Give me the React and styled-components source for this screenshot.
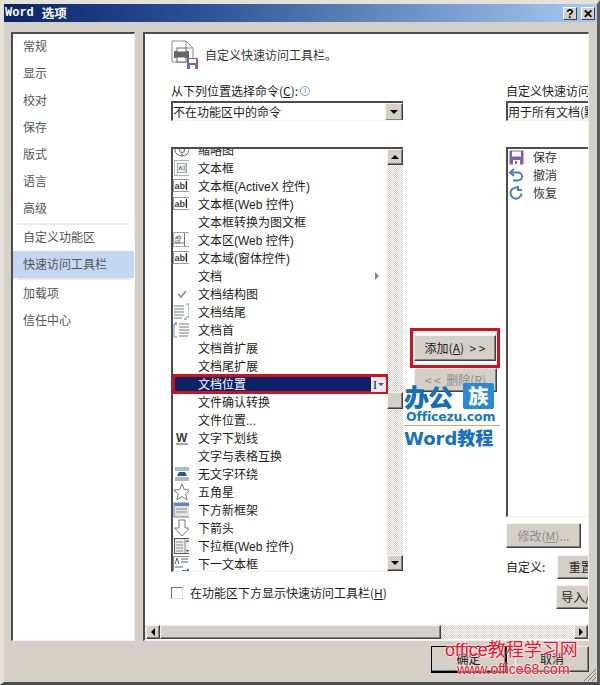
import React from 'react';
import styled, { createGlobalStyle } from 'styled-components';

const Global = createGlobalStyle`
  html, body { margin: 0; padding: 0; background: #d4d0c8; }
  * { box-sizing: border-box; }
`;
const FONT = `"Liberation Sans", "Noto Sans CJK SC", sans-serif`;
const CJK = `"Noto Sans CJK SC", "Liberation Sans", sans-serif`;
const DITHER = `repeating-conic-gradient(#d4d0c8 0 25%, #fff 0 50%) 0 0 / 2px 2px`;

const Window = styled.div`
  position: relative; width: 600px; height: 685px; display: flex; flex-direction: column;
  background: #d4d0c8; overflow: hidden; font: 12px/14px ${FONT}; color: #1c1c1c;
  border-style: solid; border-width: 4px 3px 3px 4px;
  border-color: #e4e1db #5c5c5c #4c4c4c #e4e1db;
`;
const TitleBar = styled.div`
  height: 18px; flex: none; display: flex; align-items: center; padding: 0 2px 0 1px;
  background: linear-gradient(90deg, #0a246a 0%, #2f5597 35%, #a6caf0 100%); color: #fff;
`;
const TitleWord = styled.span`font: bold 12px/16px "Liberation Mono", monospace; margin-right: 8px;`;
const TitleCjk = styled.span`font: bold 12.5px/16px ${CJK}; flex: 1;`;
const CaptionButton = styled.div`
  width: 14px; height: 13px; margin-left: ${p => p.$gap}px; background: #d4d0c8; color: #000;
  font: bold 12px/12px "Liberation Sans", sans-serif; text-align: center;
  border: 1px solid; border-color: #fff #404040 #404040 #fff;
`;
const Body = styled.div`
  flex: none; display: flex; gap: 8px; padding: 10px 6px 0 7px; height: 620px;
`;
const Inset = styled.div`
  border-style: solid; border-width: 2px 1px 1px 2px;
  border-color: #4c4c4c #f2f2f2 #f2f2f2 #4c4c4c; background: #fff;
`;
const Sidebar = styled(Inset)`
  width: 124px; height: 609px; color: #555; flex: none;
`;
const NavItem = styled.div`
  height: 27px; display: flex; align-items: center; padding: ${p => p.$pad || '0 0 2px 10px'}; font-family: ${CJK};
  background: ${p => p.$active ? '#c5d6f2' : 'transparent'};
`;
const NavRule = styled.div`height: 2px; margin: 0 4px -1px; background: #e9e9e9;`;
const MainPanel = styled(Inset)`
  width: 446px; height: 609px; display: flex; flex-direction: column; overflow: hidden; flex: none;
`;
const Scroll = styled.div`flex: 1; min-height: 0; padding: 5px 0 0 26px; overflow: hidden;`;
const Header = styled.div`display: flex; align-items: center; gap: 6px; height: 32px; font-family: ${CJK}; color: #333;`;
const Columns = styled.div`display: flex; margin-top: 12px; width: 600px;`;
const Col = styled.div`display: flex; flex-direction: column; flex: none; width: ${p => p.$w}px;`;
const Label = styled.div`height: 14px; padding-top: 2px; margin-bottom: 4px; font-family: ${CJK}; display: flex; align-items: center; white-space: nowrap;`;
const U = styled.u`text-underline-offset: 1px;`;
const Info = styled.span`
  display: inline-block; width: 10px; height: 10px; margin-left: 2px; border: 1px solid #7aa0d0; border-radius: 50%;
  color: #4a7ab8; font: 8px/8px "Liberation Sans", sans-serif; text-align: center;
`;
const Select = styled(Inset)`
  height: 20px; display: flex; align-items: center; padding-left: 0; font-family: ${CJK}; overflow: hidden; white-space: nowrap;
  justify-content: space-between; border-right-width: 0;
`;
const Raised = styled.div`
  background: #d4d0c8; border: 1px solid; border-color: #f4f2ee #404040 #404040 #f4f2ee;
  box-shadow: inset -1px -1px 0 #808080;
`;
const ArrowBtn = styled(Raised)`
  width: 18px; height: 18px; flex: none; display: flex; align-items: center; justify-content: center; position: relative;
`;
const Tri = styled.i`
  width: 0; height: 0; border-style: solid; display: block;
  ${p => p.$dir === 'up' && `border-width: 0 4px 4px; border-color: transparent transparent #000;`}
  ${p => p.$dir === 'down' && `border-width: 4px 4px 0; border-color: #000 transparent transparent;`}
  ${p => p.$dir === 'left' && `border-width: 4px 4px 4px 0; border-color: transparent #000 transparent transparent;`}
  ${p => p.$dir === 'right' && `border-width: 4px 0 4px 4px; border-color: transparent transparent transparent #000;`}
  ${p => p.$dir === 'sub' && `border-width: 4px 0 4px 4px; border-color: transparent transparent transparent #888;`}
`;
const ListBox = styled(Inset)`
  margin-top: 26px; height: ${p => p.$h}px; display: flex; overflow-x: visible; overflow-y: clip; border-right-width: 0;
`;
const ListInner = styled.div`flex: 1; min-width: 0; overflow-x: visible; overflow-y: clip; position: relative; z-index: 1;`;
const ListShift = styled.div`margin-top: -8px; padding-bottom: 4px;`;
const Row = styled.div`
  height: 18px; display: flex; align-items: center; position: relative; white-space: nowrap; font-family: ${FONT};
  padding: 2px 0 0 25px; color: #1c1c1c;
  ${p => p.$selected && `
    background: #0a246a; color: #fff; outline: 3px solid #d4101c; outline-offset: -2px; z-index: 1;
  `}
`;
const RowIcon = styled.span`position: absolute; left: 0; top: 0; width: 16px; height: 18px; display: flex; align-items: center; justify-content: center;`;
const RowEnd = styled.span`position: absolute; right: 8px; top: 5px;`;
const SelBox = styled.span`
  position: absolute; right: 1px; top: 2px; width: 15px; height: 15px; background: #e7e9f4; color: #222;
  display: flex; align-items: center; justify-content: center; gap: 1px; font: 12px/14px "Liberation Serif", serif;
`;
const MiniTri = styled.i`width: 0; height: 0; border-style: solid; border-width: 3px 3px 0; border-color: #555 transparent transparent; display: block;`;
const VScroll = styled.div`
  width: 16px; flex: none; display: flex; flex-direction: column; background: ${DITHER};
`;
const VBtn = styled(Raised)`height: 16px; flex: none; display: flex; align-items: center; justify-content: center;`;
const VTrack = styled.div`flex: 1; padding-top: 227px;`;
const VThumb = styled(Raised)`height: 17px;`;
const CheckRow = styled.div`display: flex; align-items: center; gap: 7px; margin-top: 14px; height: 14px; font-family: ${CJK}; white-space: nowrap;`;
const Check = styled.span`
  width: 12px; height: 12px; display: block; background: #fff; border: 1px solid; border-color: #707070 #e0e0e0 #e0e0e0 #707070;
`;
const MidCol = styled(Col)`padding: 252px 0 0 11px; gap: 7px;`;
const Btn = styled(Raised)`
  position: relative; display: flex; align-items: center; justify-content: center; font-family: ${CJK};
  width: ${p => p.$w}px; height: ${p => p.$h}px; flex: none; white-space: pre;
  color: ${p => p.$off ? '#8f8d88' : '#1c1c1c'};
`;
const RedBox = styled.span`
  position: absolute; left: -5px; right: -5px; top: -8px; bottom: -8px; border: 3px solid #d4101c; pointer-events: none;
`;
const CustomRow = styled.div`display: flex; align-items: center; gap: 12px; margin-top: 7px; white-space: nowrap; font-family: ${CJK};`;
const ModWrap = styled.div`margin-top: 6px;`;
const ImportWrap = styled.div`margin: 6px 0 0 50px;`;
const PlainRow = styled.div`
  height: 18px; display: flex; align-items: center; position: relative; padding-left: 25px; font-family: ${CJK}; color: #333;
`;
const PlainList = styled.div`margin-top: -1px;`;
const HScroll = styled.div`height: 14px; flex: none; display: flex; margin-bottom: 1px; background: ${DITHER}; padding: 0 0 0 1px;`;
const HBtn = styled(Raised)`width: 14px; flex: none; display: flex; align-items: center; justify-content: center;`;
const HThumb = styled(Raised)`width: 281px; flex: none;`;
const HGap = styled.div`flex: 1;`;
const Footer = styled.div`flex: 1; display: flex; justify-content: flex-end; gap: 8px; padding: 4px 8px 0 0;`;
const OkBtn = styled(Btn)`border-color: #000; border-width: 1px 2px 2px 1px;`;
const Grip = styled.svg`position: absolute; right: 0; bottom: 0;`;
const Mark = styled.div`position: absolute; left: 400px; top: 378px; width: 96px; color: #1870c0; font-family: ${FONT}; z-index: 2;`;
const MarkTop = styled.div`display: flex; align-items: center; height: 28px;`;
const MarkBig = styled.span`font: 900 25px/28px ${CJK}; letter-spacing: -1px; width: 59px; color: #1470b8;`;
const MarkBox = styled.span`
  width: 31px; height: 26px; background: #2a8ad4; color: #fff; font: 900 20px/26px ${CJK}; text-align: center; border-radius: 2px;
`;
const MarkUrl = styled.div`font: bold 12.5px/13px "DejaVu Sans", sans-serif; background: #fff; color: #1a78c2; letter-spacing: -0.2px; padding-left: 2px; height: 16px; border-bottom: 1px solid #e8a060;`;
const MarkWord = styled.div`font: 900 18px/26px "DejaVu Sans", ${CJK}; background: #fff; white-space: nowrap; height: 26px;`;
const Stamp = styled.div`
  position: absolute; left: ${p => p.$left}px; color: #f0102a; white-space: nowrap; text-shadow: 0 0 2px #fff, 0 0 2px #fff;
  top: ${p => p.$top}px; font: ${p => p.$size}px/${p => p.$lh}px ${FONT};
`;
const StampCjk = styled.span`font-family: ${CJK};`;

const stroke = { fill: 'none', stroke: '#666', strokeWidth: 1 };
const Icon = ({ k }) => {
  switch (k) {
    case 'smart': return <svg width="18" height="18"><ellipse cx="9" cy="9" rx="7" ry="6" {...stroke} /><circle cx="9" cy="9" r="2.5" {...stroke} /><path d="M3 6l4 2M15 6l-4 2M9 12v3" {...stroke} /></svg>;
    case 'frame': return <svg width="18" height="18"><rect x="1.5" y="1.5" width="15" height="15" fill="none" stroke="#666" strokeDasharray="1 1" /><rect x="4.5" y="4.5" width="9" height="9" fill="#eef" stroke="#9aa" /><path d="M6 11l1.5-4 1.5 4M10.5 7h2M10.5 9h2M10.5 11h2" stroke="#567" fill="none" /></svg>;
    case 'abl': return <svg width="18" height="16"><rect x="0.5" y="1.5" width="16" height="12" fill="#fff" stroke="#9a9a9a" /><text x="1.5" y="11" fontFamily="Liberation Sans, sans-serif" fontSize="9" fill="#444" fontWeight="bold">abl</text><path d="M13.5 3v9" stroke="#222" /></svg>;
    case 'area': return <svg width="18" height="18"><rect x="0.5" y="1.5" width="16" height="14" fill="none" stroke="#777" strokeDasharray="2 1" /><path d="M11.5 2v13M1 12h10" stroke="#777" /><text x="2" y="8" fontFamily="Liberation Sans, sans-serif" fontSize="6" fill="#444">ab</text><text x="2" y="12" fontFamily="Liberation Sans, sans-serif" fontSize="5" fill="#444">cd</text></svg>;
    case 'check': return <svg width="18" height="18"><path d="M5 9l3 3 5-6" fill="none" stroke="#8a8a8a" strokeWidth="1.6" /></svg>;
    case 'end': return <svg width="18" height="18"><path d="M1 3h10M1 6h10M1 9h10M1 12h10M1 15h8" stroke="#777" /><path d="M13 1h3v13h-3" fill="none" stroke="#6f93c4" /><path d="M11 16h3" stroke="#3a6ea8" /></svg>;
    case 'start': return <svg width="18" height="18"><path d="M6 3h11M6 6h11M6 9h11M6 12h11M6 15h9" stroke="#777" /><path d="M4 3H1v13h3" fill="none" stroke="#6f93c4" /><path d="M3 1v3" stroke="#3a6ea8" /></svg>;
    case 'w': return <svg width="18" height="18"><text x="3" y="13" fontFamily="Liberation Sans, sans-serif" fontSize="12" fontWeight="bold" fill="#3a3a3a">W</text><path d="M3 15h12" stroke="#444" /></svg>;
    case 'wrap': return <svg width="18" height="18"><path d="M2 3h14M2 5h14M2 13h14M2 15h14" stroke="#4a78a8" /><path d="M4 11l2-4h6l2 4z" fill="#2a5a90" /></svg>;
    case 'star': return <svg width="18" height="18"><path d="M9 1l2.3 5.6 6 .4-4.6 3.9 1.5 5.9L9 13.6 3.8 16.8l1.5-5.9L.7 7l6-.4z" fill="#fff" stroke="#777" /></svg>;
    case 'newframe': return <svg width="18" height="18"><rect x="1" y="2" width="16" height="14" fill="#e4e4e4" stroke="#5f7fa8" /><rect x="1" y="2" width="16" height="3" fill="#5f86bd" /><path d="M3 8h11M3 11h11" stroke="#888" /></svg>;
    case 'down': return <svg width="18" height="18"><path d="M6 1h6v8h4.5L9 17 1.500 9H6z" fill="#fff" stroke="#777" /></svg>;
    case 'dropweb': return <svg width="18" height="18"><rect x="1.5" y="1.5" width="15" height="15" fill="#eee" stroke="#555" /><path d="M12 2v14M3 5h7M3 8h7M3 11h7M3 14h7" stroke="#888" /><path d="M13 5l1.500-2 1.500 2zM13 13l1.500 2 1.500-2z" fill="#444" /></svg>;
    case 'next': return <svg width="18" height="18"><rect x="0.5" y="1.500" width="16" height="15" fill="#fff" stroke="#888" /><path d="M2 9l2-6 2 6M8 4h7M8 7h7M2 12h8" stroke="#5a5a8a" fill="none" /><path d="M9 15h5v-2l3 2.500-3 2.500v-2H9z" fill="#3a6ec0" /></svg>;
    default: return null;
  }
};
const Floppy = ({ s = 15 }) => (
  <svg width={s} height={s} viewBox="0 0 15 15"><rect x="0.500" y="0.500" width="14" height="14" fill="#8460a8" /><rect x="3" y="1.500" width="9" height="5" fill="#fff" /><rect x="4" y="10" width="7" height="5" fill="#fff" /><rect x="6" y="11" width="2" height="3" fill="#8460a8" /></svg>
);
const rows = [
  ['缩略图', 'smart'], ['文本框', 'frame'], ['文本框(ActiveX 控件)', 'abl'], ['文本框(Web 控件)', 'abl'], ['文本框转换为图文框'],
  ['文本区(Web 控件)', 'area'], ['文本域(窗体控件)', 'abl'], ['文档', null, 'sub'], ['文档结构图', 'check'], ['文档结尾', 'end'],
  ['文档首', 'start'], ['文档首扩展'], ['文档尾扩展'], ['文档位置', null, 'sel'], ['文件确认转换'], ['文件位置...'], ['文字下划线', 'w'],
  ['文字与表格互换'], ['无文字环绕', 'wrap'], ['五角星', 'star'], ['下方新框架', 'newframe'], ['下箭头', 'down'], ['下拉框(Web 控件)', 'dropweb'], ['下一文本框', 'next'],
];
const side1 = ['常规', '显示', '校对', '保存', '版式', '语言', '高级'];

export default function App() {
  return (
    <Window>
      <Global />
      <TitleBar>
        <TitleWord>Word</TitleWord><TitleCjk>选项</TitleCjk>
        <CaptionButton $gap={0}>?</CaptionButton>
        <CaptionButton $gap={4}>✕</CaptionButton>
      </TitleBar>
      <Body>
        <Sidebar>
          {side1.map(t => <NavItem key={t} $pad="0 0 4px 10px">{t}</NavItem>)}
          <NavRule />
          <NavItem>自定义功能区</NavItem>
          <NavItem $active>快速访问工具栏</NavItem>
          <NavRule />
          <NavItem $pad="0 0 0 10px">加载项</NavItem>
          <NavItem $pad="0 0 0 10px">信任中心</NavItem>
        </Sidebar>
        <MainPanel>
          <Scroll>
            <Header>
              <svg width="28" height="30" viewBox="0 0 28 30">
                <path d="M1 1h14l7 7v14H1z" fill="#fff" stroke="#8a8a8a" />
                <path d="M15 1v7h7" fill="none" stroke="#8a8a8a" />
                <rect x="3" y="11" width="15" height="7" fill="#666" />
                <rect x="6" y="8" width="9" height="4" fill="#fff" stroke="#666" />
                <rect x="6" y="17" width="9" height="5" fill="#fff" stroke="#666" />
                <rect x="16" y="18" width="11" height="11" fill="#8460a8" />
                <rect x="18" y="19" width="7" height="4" fill="#fff" />
                <rect x="19" y="25" width="5" height="4" fill="#fff" />
              </svg>
              自定义快速访问工具栏。
            </Header>
            <Columns>
              <Col $w={232}>
                <Label>从下列位置选择命令(<U>C</U>):<Info>i</Info></Label>
                <Select>不在功能区中的命令<ArrowBtn><Tri $dir="down" /></ArrowBtn></Select>
                <ListBox $h={425}>
                  <ListInner>
                    <ListShift>
                      {rows.map(([t, k, extra]) => (
                        <Row key={t} $selected={extra === 'sel'}>
                          {k && <RowIcon><Icon k={k} /></RowIcon>}
                          {t}
                          {extra === 'sub' && <RowEnd><Tri $dir="sub" /></RowEnd>}
                          {extra === 'sel' && <SelBox>I<MiniTri /></SelBox>}
                        </Row>
                      ))}
                    </ListShift>
                  </ListInner>
                  <VScroll>
                    <VBtn><Tri $dir="up" /></VBtn>
                    <VTrack><VThumb /></VTrack>
                    <VBtn><Tri $dir="down" /></VBtn>
                  </VScroll>
                </ListBox>
                <CheckRow><Check /><span>在功能区下方显示快速访问工具栏(<U>H</U>)</span></CheckRow>
              </Col>
              <MidCol $w={103}>
                <Btn $w={82} $h={26}><span>添加(<U>A</U>)  &gt; &gt;</span><RedBox /></Btn>
                <Btn $w={83} $h={24} $off>&lt; &lt;  删除(R)</Btn>
              </MidCol>
              <Col $w={140}>
                <Label>自定义快速访问工具栏(<U>Q</U>):</Label>
                <Select>用于所有文档(默认)</Select>
                <ListBox $h={370}>
                  <ListInner>
                    <PlainList>
                      <PlainRow><RowIcon><Floppy /></RowIcon>保存</PlainRow>
                      <PlainRow><RowIcon><svg width="16" height="16" viewBox="0 0 16 16"><path d="M6 2L2 5.500 6 9M2.500 5.500H10a4 4 0 0 1 0 8H5" fill="none" stroke="#4a7fb5" strokeWidth="2" /></svg></RowIcon>撤消</PlainRow>
                      <PlainRow><RowIcon><svg width="16" height="16" viewBox="0 0 16 16"><path d="M11 3.500a5.500 5.500 0 1 0 2.500 5M10 1v4h4" fill="none" stroke="#4a7fb5" strokeWidth="2" /></svg></RowIcon>恢复</PlainRow>
                    </PlainList>
                  </ListInner>
                </ListBox>
                <ModWrap><Btn $w={75} $h={25} $off><span>修改(<U>M</U>)...</span></Btn></ModWrap>
                <CustomRow>自定义:<Btn $w={62} $h={24}>重置(E)</Btn></CustomRow>
                <ImportWrap><Btn $w={79} $h={24}>导入/导出(P)</Btn></ImportWrap>
              </Col>
            </Columns>
          </Scroll>
          <HScroll>
            <HBtn><Tri $dir="left" /></HBtn>
            <HThumb />
            <HGap />
            <HBtn><Tri $dir="right" /></HBtn>
          </HScroll>
        </MainPanel>
      </Body>
      <Footer>
        <OkBtn $w={76} $h={27}>确定</OkBtn>
        <Btn $w={74} $h={26}>取消</Btn>
      </Footer>
      <Grip width="14" height="14"><path d="M13 1L1 13M13 5L5 13M13 9l-4 4" stroke="#808080" /></Grip>
      <Mark>
        <MarkTop><MarkBig>办公</MarkBig><MarkBox>族</MarkBox></MarkTop>
        <MarkUrl>Officezu.com</MarkUrl>
        <MarkWord>Word教程</MarkWord>
      </Mark>
      <Stamp $left={441} $top={634} $size={18} $lh={20}>office<StampCjk>教程学习网</StampCjk></Stamp>
      <Stamp $left={453} $top={656} $size={14} $lh={18}>www.office68.com</Stamp>
    </Window>
  );
}
